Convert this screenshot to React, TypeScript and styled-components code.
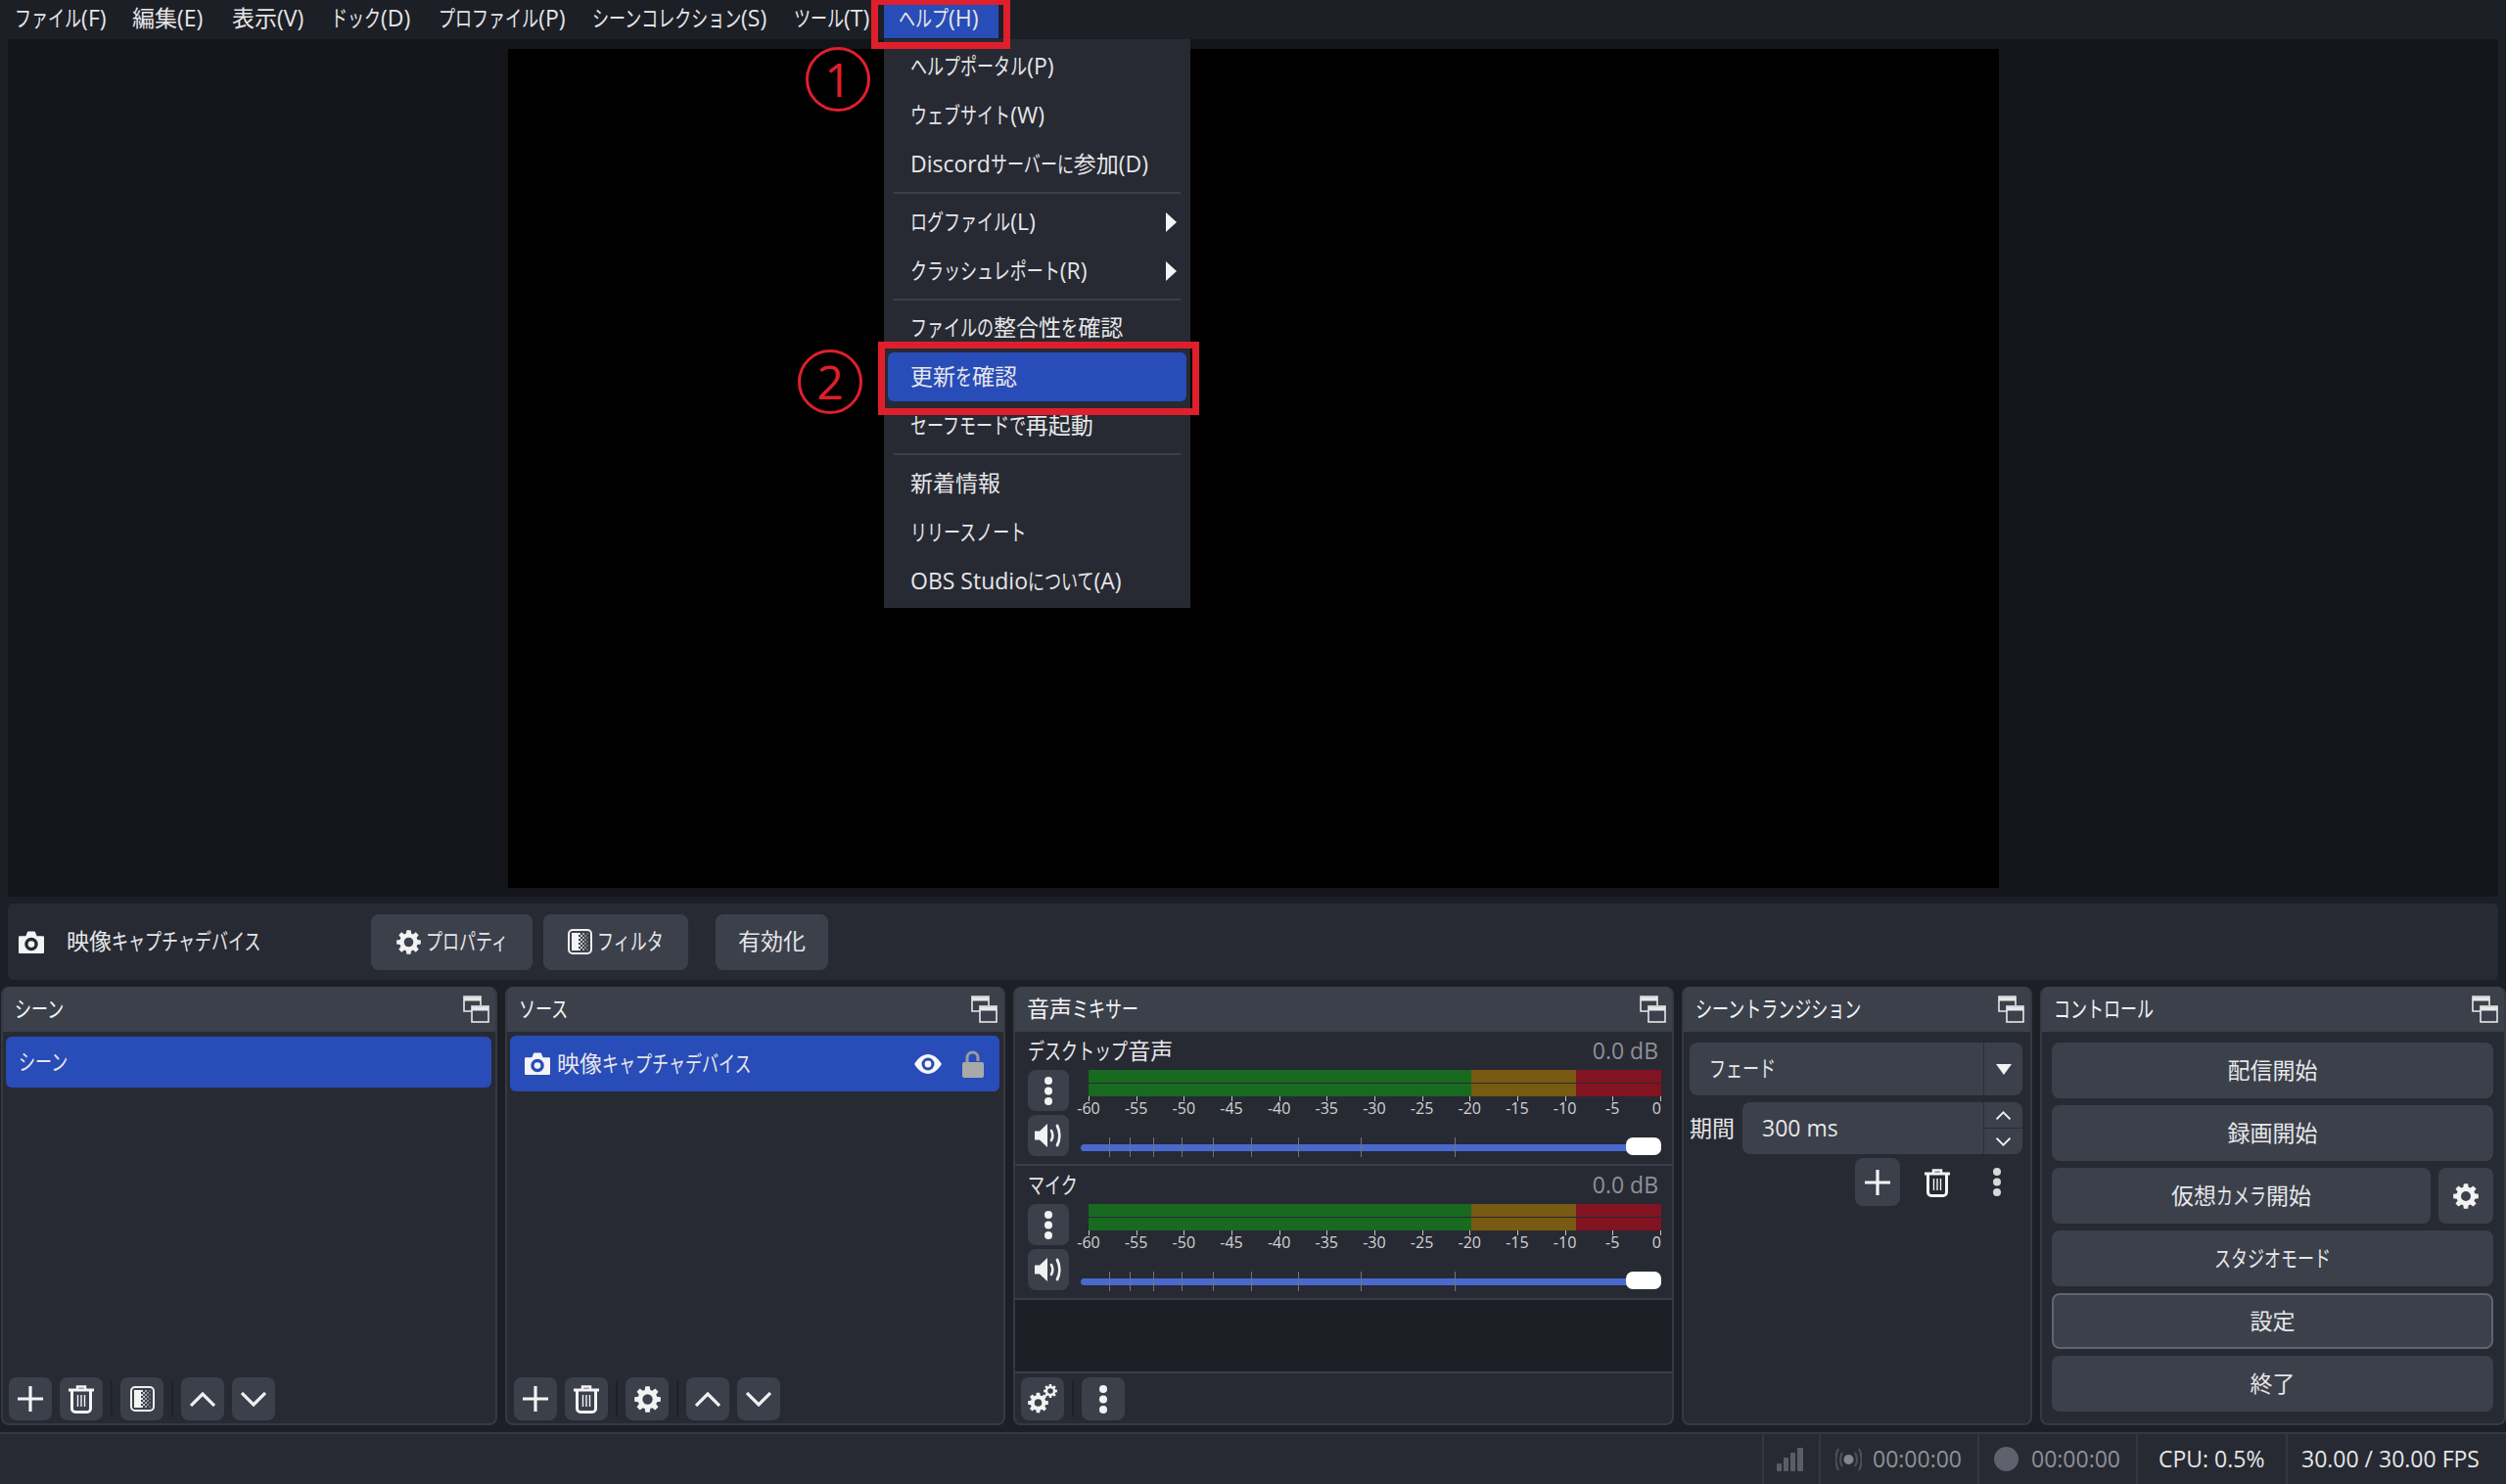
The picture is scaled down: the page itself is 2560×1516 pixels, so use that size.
import React from "react"
import styled, { createGlobalStyle } from "styled-components"

const BG = "#1d1f26"
const PANEL = "#272a33"
const RAISED = "#3c404b"
const BLUE = "#284cb8"
const RED = "#e01f2c"

const GlobalStyle = createGlobalStyle`
  html, body {
    margin: 0;
    padding: 0;
    background: ${BG};
  }
  * {
    box-sizing: border-box;
  }
`

const Page = styled.div`
  position: relative;
  width: 2560px;
  height: 1516px;
  overflow: hidden;
  display: flex;
  flex-direction: column;
  background: ${BG};
  color: #e6e6e8;
  font-family: "Open Sans", "Noto Sans CJK JP", sans-serif;
  font-size: 23px;
  line-height: 1.2;
  white-space: nowrap;
`

// kana in the reference comes from a narrow UI font, so squeeze the full-width glyphs
const KANA_SCALE = 0.74

const KanaRun = styled.span<{ $n: number }>`
  display: inline-block;
  transform: scaleX(${KANA_SCALE});
  transform-origin: left center;
  margin-right: ${p => (-p.$n * (1 - KANA_SCALE)).toFixed(3)}em;
`

const Jp = ({ t }: { t: string }) => (
  <span>
    {t.split(/([\u3040-\u30FF]+)/).map((part, i) =>
      i % 2 === 1 ? <KanaRun key={i} $n={part.length}>{part}</KanaRun> : part
    )}
  </span>
)

/* ---------- icons ---------- */

const gearPath = (cx: number, cy: number, r: number, hole: number) => {
  const teeth = 8
  const pts: string[] = []
  for (let i = 0; i < teeth; i++) {
    const a = (i / teeth) * Math.PI * 2
    const w = Math.PI / teeth
    const at = (rad: number, ang: number) =>
      `${(cx + Math.cos(ang) * rad).toFixed(2)} ${(cy + Math.sin(ang) * rad).toFixed(2)}`
    pts.push(at(r * 0.74, a - w * 0.72), at(r, a - w * 0.42), at(r, a + w * 0.42), at(r * 0.74, a + w * 0.72))
  }
  return `M${pts.join("L")}Z M${cx - hole} ${cy}a${hole} ${hole} 0 1 0 ${hole * 2} 0a${hole} ${hole} 0 1 0 ${-hole * 2} 0Z`
}

const Gear = ({ size = 26 }: { size?: number }) => (
  <svg width={size} height={size} viewBox="0 0 24 24" fill="#f2f2f2">
    <path fillRule="evenodd" d={gearPath(12, 12, 12, 4.6)} />
  </svg>
)

const GearPair = () => (
  <svg width="30" height="30" viewBox="0 0 30 30" fill="#f2f2f2">
    <path fillRule="evenodd" d={gearPath(10.5, 19, 10.5, 3.8)} />
    <path fillRule="evenodd" d={gearPath(23, 7, 7, 2.8)} />
  </svg>
)

const Camera = () => (
  <svg width="26" height="23" viewBox="0 0 25 22" fill="#f4f4f4">
    <path
      fillRule="evenodd"
      d="M1 5h6l2-4.500h7L18 5h6a1 1 0 0 1 1 1v15a1 1 0 0 1-1 1H1a1 1 0 0 1-1-1V6a1 1 0 0 1 1-1zM12.500 6.500a6.500 6.500 0 1 0 0 13 6.500 6.500 0 0 0 0-13z"
    />
    <circle cx="12.5" cy="13" r="3.2" />
  </svg>
)

const FloatIcon = () => (
  <svg width="27" height="28" viewBox="0 0 27 28" fill="none" stroke="#e8e8e8" strokeWidth="1.6">
    <path d="M9 16H1V1h17v9" />
    <path d="M1 3.5h17" strokeWidth="4" />
    <rect x="9" y="11" width="17" height="16" />
    <path d="M9 13.5h17" strokeWidth="4" />
  </svg>
)

const Plus = () => (
  <svg width="28" height="28" viewBox="0 0 28 28" stroke="#f4f4f4" strokeWidth="3.2">
    <path d="M14 1v26M1 14h26" />
  </svg>
)

const Trash = () => (
  <svg width="28" height="30" viewBox="0 0 28 30" fill="none" stroke="#f4f4f4">
    <path d="M1 6h26" strokeWidth="3" />
    <path d="M10 5V2.5h8V5" strokeWidth="2.5" />
    <path d="M4.5 7v18a3.5 3.5 0 0 0 3.5 3.5h12a3.5 3.5 0 0 0 3.5-3.5V7" strokeWidth="3" />
    <path d="M10.5 11v12M14 11v12M17.5 11v12" strokeWidth="1.4" />
  </svg>
)

const Chevron = ({ up, w = 26, h = 15 }: { up?: boolean; w?: number; h?: number }) => (
  <svg width={w} height={h} viewBox="0 0 26 15" fill="none" stroke="#f0f0f0" strokeWidth="3.2">
    <path d={up ? "M1 14L13 2l12 12" : "M1 1l12 12L25 1"} />
  </svg>
)

// solid on the left, dissolving to nothing through a dither on the right
const DITHER = Array.from({ length: 5 }, (_, col) =>
  Array.from({ length: 9 }, (_, row) => ({ col, row }))
)
  .flat()
  .filter(({ col, row }) => (col + row) % 2 === 0)

const FilterIcon = ({ size = 25 }: { size?: number }) => (
  <svg width={size} height={size + 1} viewBox="0 0 25 26">
    <rect x="4" y="4" width="7" height="18" fill="#f4f4f4" />
    {DITHER.map(({ col, row }) => (
      <rect
        key={`${col}-${row}`}
        x={11 + col * 2}
        y={4 + row * 2}
        width="2"
        height="2"
        fill="#f4f4f4"
        opacity={0.9 - col * 0.17}
      />
    ))}
    <rect x="1" y="1" width="23" height="24" rx="4" fill="none" stroke="#f0f0f0" strokeWidth="2" />
  </svg>
)

const Kebab = ({ color = "#f2f2f2" }: { color?: string }) => (
  <svg width="10" height="31" viewBox="0 0 10 31" fill={color}>
    <circle cx="5" cy="5" r="4" />
    <circle cx="5" cy="15.5" r="4" />
    <circle cx="5" cy="26" r="4" />
  </svg>
)

const Speaker = () => (
  <svg width="29" height="26" viewBox="0 0 29 26" fill="none" stroke="#f2f2f2">
    <path d="M0 8.5h5L13 1v24l-8-7.5H0z" fill="#f2f2f2" stroke="none" />
    <path d="M17 8c1.6 3 1.6 7 0 10" strokeWidth="2.6" strokeLinecap="round" />
    <path d="M23 3c3 6 3 14 0 20" strokeWidth="2.8" strokeLinecap="round" />
  </svg>
)

const Eye = () => (
  <svg width="28" height="20" viewBox="0 0 28 20" fill="#f6f6f6">
    <path
      fillRule="evenodd"
      d="M0 10C4 3.5 9 0 14 0s10 3.500 14 10c-4 6.500-9 10-14 10S4 16.500 0 10zM14 3.500a6.500 6.500 0 1 0 0 13 6.500 6.500 0 0 0 0-13z"
    />
    <circle cx="14" cy="10" r="3.4" />
  </svg>
)

const OpenLock = () => (
  <svg width="22" height="28" viewBox="0 0 22 28" fill="none">
    <path d="M5 12V7.500a5.500 5.500 0 0 1 11 0V11" stroke="#9b9ba0" strokeWidth="3" />
    <rect y="12" width="22" height="16" rx="2" fill="#a9a9a9" />
  </svg>
)

const SignalBars = () => (
  <svg width="27" height="24" viewBox="0 0 27 24" fill="#5a5d66">
    <rect y="16" width="5" height="8" rx="1" />
    <rect x="7" y="10" width="5" height="14" rx="1" />
    <rect x="14" y="5" width="5" height="19" rx="1" />
    <rect x="21" y="0" width="6" height="24" rx="1" />
  </svg>
)

const Broadcast = () => (
  <svg width="27" height="24" viewBox="0 0 27 24" fill="none" stroke="#4f525a" strokeWidth="2">
    <path d="M7 5c-2.600 4-2.600 10 0 14M20 5c2.600 4 2.600 10 0 14" />
    <path d="M3 1C-.5 7-.5 17 3 23M24 1c3.500 6 3.500 16 0 22" />
    <circle cx="13.500" cy="12" r="5" fill="#83858c" stroke="none" />
  </svg>
)

/* ---------- menu ---------- */

const MenuBar = styled.div`
  height: 40px;
  flex: none;
  display: flex;
  align-items: flex-start;
  font-size: 23px;
`

const MenuEntry = styled.div<{ $w: number; $active?: boolean }>`
  width: ${p => p.$w}px;
  height: ${p => (p.$active ? "34px" : "38px")};
  margin-top: ${p => (p.$active ? "5px" : "0")};
  padding: 0 0 ${p => (p.$active ? "6px" : "0")} 15px;
  display: flex;
  align-items: center;
  background: ${p => (p.$active ? BLUE : "transparent")};
`

const Dropdown = styled.div`
  position: absolute;
  left: 903px;
  top: 40px;
  width: 313px;
  height: 581px;
  padding-top: 3px;
  background: ${PANEL};
`

const DropItem = styled.div<{ $active?: boolean }>`
  height: 50px;
  margin: 0 4px;
  padding: 0 10px 0 23px;
  display: flex;
  align-items: center;
  justify-content: space-between;
  border-radius: 6px;
  background: ${p => (p.$active ? BLUE : "transparent")};
`

const DropSeparator = styled.div`
  height: 2px;
  margin: 3px 10px 3.5px;
  background: #3c404b;
`

const SubArrow = styled.div`
  width: 0;
  height: 0;
  border-left: 11px solid #f4f4f4;
  border-top: 10px solid transparent;
  border-bottom: 10px solid transparent;
`

const RedBox = styled.div<{ $x: number; $y: number; $w: number; $h: number }>`
  position: absolute;
  left: ${p => p.$x}px;
  top: ${p => p.$y}px;
  width: ${p => p.$w}px;
  height: ${p => p.$h}px;
  border: 7px solid ${RED};
`

const Marker = styled.div<{ $x: number; $y: number }>`
  position: absolute;
  left: ${p => p.$x}px;
  top: ${p => p.$y}px;
  width: 66px;
  height: 66px;
  border: 3px solid ${RED};
  border-radius: 50%;
  display: flex;
  align-items: center;
  justify-content: center;
  color: ${RED};
  font-size: 48px;
  line-height: 1;
`

/* ---------- preview and context bar ---------- */

const Preview = styled.div`
  flex: none;
  height: 876px;
  margin: 0 8px;
  padding: 10px 0 9px;
  display: flex;
  justify-content: center;
  background: #13151a;
`

const PreviewCanvas = styled.div`
  width: 1523px;
  background: #000;
`

const ContextBar = styled.div`
  flex: none;
  height: 78px;
  margin: 7px 8px 0;
  padding-left: 11px;
  display: flex;
  align-items: center;
  border-radius: 6px;
  background: ${PANEL};
`

const ContextName = styled.div`
  width: 334px;
  padding-left: 23px;
`

const ContextButton = styled.div<{ $w: number; $gap?: number }>`
  width: ${p => p.$w}px;
  height: 57px;
  margin-right: ${p => p.$gap ?? 11}px;
  display: flex;
  align-items: center;
  justify-content: center;
  gap: 5px;
  border-radius: 8px;
  background: ${RAISED};
`

/* ---------- docks ---------- */

const DockRow = styled.div`
  flex: none;
  height: 448px;
  margin-top: 7px;
  padding-left: 1px;
  display: flex;
  gap: 8px;
`

const Dock = styled.section<{ $w: number }>`
  width: ${p => p.$w}px;
  display: flex;
  flex-direction: column;
  overflow: hidden;
  border: 2px solid #363942;
  border-top: 0;
  border-radius: 8px;
  background: ${PANEL};
`

const DockHeader = styled.header`
  flex: none;
  height: 46px;
  padding: 0 6px 0 12px;
  display: flex;
  align-items: center;
  justify-content: space-between;
  background: ${RAISED};
  color: #f4f4f4;
`

const DockBody = styled.div`
  flex: 1;
  display: flex;
  flex-direction: column;
  min-height: 0;
`

const Toolbar = styled.div<{ $pad: number }>`
  flex: none;
  margin-top: auto;
  padding: 0 0 3px ${p => p.$pad}px;
  display: flex;
  align-items: center;
  gap: 8px;
`

const ToolButton = styled.div`
  width: 44px;
  height: 44px;
  display: flex;
  align-items: center;
  justify-content: center;
  border-radius: 8px;
  background: ${RAISED};
`

const ToolDivider = styled.div`
  width: 2px;
  height: 36px;
  background: #1f2128;
`

const SceneRow = styled.div`
  height: 52px;
  margin: 5px 4px 0 3px;
  padding-left: 13px;
  display: flex;
  align-items: center;
  border-radius: 6px;
  background: ${BLUE};
`

const SourceRow = styled.div`
  height: 57px;
  margin: 4px 4px 0 3px;
  padding: 0 16px 0 15px;
  display: flex;
  align-items: center;
  border-radius: 6px;
  background: ${BLUE};
`

const SourceName = styled.div`
  flex: 1;
  padding-left: 7px;
`

const SourceIcons = styled.div`
  display: flex;
  align-items: center;
  gap: 21px;
`

/* ---------- mixer ---------- */

const Channel = styled.div`
  flex: none;
  height: 137px;
  padding: 8px 14px 0 13px;
  border-bottom: 2px solid #3a3d47;
`

const ChannelTitle = styled.div`
  height: 24px;
  display: flex;
  align-items: center;
  justify-content: space-between;
`

const Db = styled.span`
  color: #8f9197;
`

const ChannelBody = styled.div`
  margin-top: 7px;
  display: grid;
  grid-template-columns: 42px 1fr;
  column-gap: 12px;
`

const ChannelButtons = styled.div`
  display: flex;
  flex-direction: column;
  gap: 4px;
`

const ChannelButton = styled.div`
  height: 42px;
  display: flex;
  align-items: center;
  justify-content: center;
  border-radius: 8px;
  background: ${RAISED};
`

const MeterColumn = styled.div`
  display: flex;
  flex-direction: column;
`

const Meter = styled.div`
  height: 27px;
  margin-left: 8px;
  display: flex;
  flex-direction: column;
  gap: 1px;
`

const MeterLine = styled.div`
  flex: 1;
  display: flex;
`

const MeterSegment = styled.div<{ $w: number; $c: string }>`
  width: ${p => p.$w}px;
  background: ${p => p.$c};
`

const Scale = styled.div`
  height: 25px;
  margin-left: 8px;
  display: flex;
  justify-content: space-between;
`

const ScaleMark = styled.div`
  position: relative;
  width: 1px;
  height: 5px;
  background: #c6c6c8;
`

const ScaleLabel = styled.span<{ $end?: boolean }>`
  position: absolute;
  top: 1px;
  left: 0;
  transform: translateX(${p => (p.$end ? "-90%" : "-50%")});
  font-size: 16px;
  line-height: 22px;
  color: #d2d2d4;
`

const Fader = styled.div`
  position: relative;
  height: 20px;
  margin-top: 17px;
  display: flex;
  align-items: center;
`

const FaderTrack = styled.div`
  width: 100%;
  height: 7px;
  border-radius: 4px;
  background: #4a69cf;
`

const FaderTick = styled.div`
  position: absolute;
  top: 0;
  width: 1px;
  height: 20px;
  background: #70737c;
`

const FaderHandle = styled.div`
  position: absolute;
  right: 0;
  top: 0;
  width: 36px;
  height: 18px;
  border-radius: 7px;
  background: #fff;
`

const MixerFill = styled.div`
  flex: 1;
  border-bottom: 2px solid #3a3d47;
  background: ${BG};
`

const MixerToolbar = styled(Toolbar)`
  margin-top: 4px;
`

/* ---------- transitions ---------- */

const TransitionBody = styled(DockBody)`
  padding: 11px 8px 0 6px;
  gap: 7px;
`

const Combo = styled.div`
  height: 54px;
  display: flex;
  border-radius: 8px;
  background: ${RAISED};
`

const ComboText = styled.div<{ $pad: number }>`
  flex: 1;
  padding-left: ${p => p.$pad}px;
  display: flex;
  align-items: center;
`

const ComboSide = styled.div`
  width: 40px;
  display: flex;
  align-items: center;
  justify-content: center;
  border-left: 1px solid #2b2e37;
`

const ComboArrow = styled.div`
  width: 0;
  height: 0;
  border-top: 11px solid #f2f2f2;
  border-left: 8px solid transparent;
  border-right: 8px solid transparent;
`

const DurationRow = styled.div`
  display: flex;
  align-items: center;
  gap: 8px;
`

const SpinBox = styled(Combo)`
  flex: 1;
  height: 53px;
`

const SpinSide = styled.div`
  width: 40px;
  display: flex;
  flex-direction: column;
  border-left: 1px solid #2b2e37;
`

const SpinStep = styled.div`
  flex: 1;
  display: flex;
  align-items: center;
  justify-content: center;
  & + & {
    border-top: 1px solid #2b2e37;
  }
`

const TransitionTools = styled.div`
  margin-top: -3px;
  padding-right: 3px;
  display: flex;
  justify-content: flex-end;
  gap: 15px;
`

const TransitionTool = styled.div<{ $raised?: boolean }>`
  width: 46px;
  height: 49px;
  display: flex;
  align-items: center;
  justify-content: center;
  border-radius: 8px;
  background: ${p => (p.$raised ? RAISED : "transparent")};
`

/* ---------- controls ---------- */

const ControlBody = styled(DockBody)`
  padding: 11px 11px 0 10px;
  gap: 7px;
`

const ControlLine = styled.div`
  display: flex;
  gap: 8px;
`

const ControlButton = styled.div<{ $focus?: boolean; $w?: number }>`
  flex: ${p => (p.$w ? "none" : "1")};
  width: ${p => (p.$w ? `${p.$w}px` : "auto")};
  height: 57px;
  display: flex;
  align-items: center;
  justify-content: center;
  border: ${p => (p.$focus ? "2px solid #61646e" : "0")};
  border-radius: 8px;
  background: ${RAISED};
`

/* ---------- status bar ---------- */

const StatusBar = styled.footer`
  flex: 1;
  margin-top: 7px;
  display: flex;
  justify-content: flex-end;
  border-top: 2px solid #34373f;
  background: ${PANEL};
`

const StatusCell = styled.div<{ $w: number; $pad: number; $gap?: number }>`
  width: ${p => p.$w}px;
  padding-left: ${p => p.$pad}px;
  display: flex;
  align-items: center;
  gap: ${p => p.$gap ?? 0}px;
  border-left: 2px solid #34373f;
`

const StatusTime = styled.span`
  color: #8f9197;
`

const RecordDot = styled.div`
  width: 25px;
  height: 25px;
  border-radius: 50%;
  background: #5f626c;
`

/* ---------- data ---------- */

const MENU: [string, number][] = [
  ["ファイル(F)", 120],
  ["編集(E)", 102],
  ["表示(V)", 101],
  ["ドック(D)", 110],
  ["プロファイル(P)", 157],
  ["シーンコレクション(S)", 206],
  ["ツール(T)", 107],
]

const DB_MARKS = ["-60", "-55", "-50", "-45", "-40", "-35", "-30", "-25", "-20", "-15", "-10", "-5", "0"]
const FADER_TICKS = [29, 50, 74, 103, 135, 174, 222, 286, 382]

const MeterBar = () => (
  <MeterLine>
    <MeterSegment $w={391} $c="#186a20" />
    <MeterSegment $w={107} $c="#795a12" />
    <MeterSegment $w={87} $c="#821321" />
  </MeterLine>
)

const MixerChannel = ({ name }: { name: string }) => (
  <Channel>
    <ChannelTitle>
      <Jp t={name} />
      <Db>0.0 dB</Db>
    </ChannelTitle>
    <ChannelBody>
      <ChannelButtons>
        <ChannelButton><Kebab /></ChannelButton>
        <ChannelButton><Speaker /></ChannelButton>
      </ChannelButtons>
      <MeterColumn>
        <Meter>
          <MeterBar />
          <MeterBar />
        </Meter>
        <Scale>
          {DB_MARKS.map((m, i) => (
            <ScaleMark key={m}>
              <ScaleLabel $end={i === DB_MARKS.length - 1}>{m}</ScaleLabel>
            </ScaleMark>
          ))}
        </Scale>
        <Fader>
          <FaderTrack />
          {FADER_TICKS.map(x => (
            <FaderTick key={x} style={{ left: x }} />
          ))}
          <FaderHandle />
        </Fader>
      </MeterColumn>
    </ChannelBody>
  </Channel>
)

const Header = ({ title }: { title: string }) => (
  <DockHeader>
    <Jp t={title} />
    <FloatIcon />
  </DockHeader>
)

const App = () => {
  return (
    <Page>
      <GlobalStyle />

      <MenuBar>
        {MENU.map(([label, w]) => (
          <MenuEntry key={label} $w={w}><Jp t={label} /></MenuEntry>
        ))}
        <MenuEntry $w={117} $active><Jp t="ヘルプ(H)" /></MenuEntry>
      </MenuBar>

      <Preview>
        <PreviewCanvas />
      </Preview>

      <ContextBar>
        <Camera />
        <ContextName><Jp t="映像キャプチャデバイス" /></ContextName>
        <ContextButton $w={165}><Gear size={25} /><Jp t="プロパティ" /></ContextButton>
        <ContextButton $w={148} $gap={28}><FilterIcon /><Jp t="フィルタ" /></ContextButton>
        <ContextButton $w={115}>有効化</ContextButton>
      </ContextBar>

      <DockRow>
        <Dock $w={507}>
          <Header title="シーン" />
          <DockBody>
            <SceneRow><Jp t="シーン" /></SceneRow>
            <Toolbar $pad={6}>
              <ToolButton><Plus /></ToolButton>
              <ToolButton><Trash /></ToolButton>
              <ToolDivider />
              <ToolButton><FilterIcon /></ToolButton>
              <ToolDivider />
              <ToolButton><Chevron up /></ToolButton>
              <ToolButton><Chevron /></ToolButton>
            </Toolbar>
          </DockBody>
        </Dock>

        <Dock $w={511}>
          <Header title="ソース" />
          <DockBody>
            <SourceRow>
              <Camera />
              <SourceName><Jp t="映像キャプチャデバイス" /></SourceName>
              <SourceIcons>
                <Eye />
                <OpenLock />
              </SourceIcons>
            </SourceRow>
            <Toolbar $pad={7}>
              <ToolButton><Plus /></ToolButton>
              <ToolButton><Trash /></ToolButton>
              <ToolDivider />
              <ToolButton><Gear size={27} /></ToolButton>
              <ToolDivider />
              <ToolButton><Chevron up /></ToolButton>
              <ToolButton><Chevron /></ToolButton>
            </Toolbar>
          </DockBody>
        </Dock>

        <Dock $w={675}>
          <Header title="音声ミキサー" />
          <DockBody>
            <MixerChannel name="デスクトップ音声" />
            <MixerChannel name="マイク" />
            <MixerFill />
            <MixerToolbar $pad={6}>
              <ToolButton><GearPair /></ToolButton>
              <ToolDivider />
              <ToolButton><Kebab /></ToolButton>
            </MixerToolbar>
          </DockBody>
        </Dock>

        <Dock $w={358}>
          <Header title="シーントランジション" />
          <TransitionBody>
            <Combo>
              <ComboText $pad={20}><Jp t="フェード" /></ComboText>
              <ComboSide><ComboArrow /></ComboSide>
            </Combo>
            <DurationRow>
              期間
              <SpinBox>
                <ComboText $pad={20}>300 ms</ComboText>
                <SpinSide>
                  <SpinStep><Chevron up w={15} h={9} /></SpinStep>
                  <SpinStep><Chevron w={15} h={9} /></SpinStep>
                </SpinSide>
              </SpinBox>
            </DurationRow>
            <TransitionTools>
              <TransitionTool $raised><Plus /></TransitionTool>
              <TransitionTool><Trash /></TransitionTool>
              <TransitionTool><Kebab color="#d8d8da" /></TransitionTool>
            </TransitionTools>
          </TransitionBody>
        </Dock>

        <Dock $w={476}>
          <Header title="コントロール" />
          <ControlBody>
            <ControlLine><ControlButton>配信開始</ControlButton></ControlLine>
            <ControlLine><ControlButton>録画開始</ControlButton></ControlLine>
            <ControlLine>
              <ControlButton><Jp t="仮想カメラ開始" /></ControlButton>
              <ControlButton $w={56}><Gear /></ControlButton>
            </ControlLine>
            <ControlLine><ControlButton><Jp t="スタジオモード" /></ControlButton></ControlLine>
            <ControlLine><ControlButton $focus>設定</ControlButton></ControlLine>
            <ControlLine><ControlButton>終了</ControlButton></ControlLine>
          </ControlBody>
        </Dock>
      </DockRow>

      <StatusBar>
        <StatusCell $w={58} $pad={13}><SignalBars /></StatusCell>
        <StatusCell $w={162} $pad={15} $gap={11}><Broadcast /><StatusTime>00:00:00</StatusTime></StatusCell>
        <StatusCell $w={162} $pad={15} $gap={13}><RecordDot /><StatusTime>00:00:00</StatusTime></StatusCell>
        <StatusCell $w={153} $pad={21}>CPU: 0.5%</StatusCell>
        <StatusCell $w={225} $pad={14}>30.00 / 30.00 FPS</StatusCell>
      </StatusBar>

      <Dropdown>
        <DropItem><Jp t="ヘルプポータル(P)" /></DropItem>
        <DropItem><Jp t="ウェブサイト(W)" /></DropItem>
        <DropItem><Jp t="Discordサーバーに参加(D)" /></DropItem>
        <DropSeparator />
        <DropItem><Jp t="ログファイル(L)" /><SubArrow /></DropItem>
        <DropItem><Jp t="クラッシュレポート(R)" /><SubArrow /></DropItem>
        <DropSeparator />
        <DropItem><Jp t="ファイルの整合性を確認" /></DropItem>
        <DropItem $active><Jp t="更新を確認" /></DropItem>
        <DropItem><Jp t="セーフモードで再起動" /></DropItem>
        <DropSeparator />
        <DropItem>新着情報</DropItem>
        <DropItem><Jp t="リリースノート" /></DropItem>
        <DropItem><Jp t="OBS Studioについて(A)" /></DropItem>
      </Dropdown>

      <RedBox $x={890} $y={-2} $w={142} $h={52} />
      <RedBox $x={897} $y={349} $w={328} $h={75} />
      <Marker $x={823} $y={48}>1</Marker>
      <Marker $x={815} $y={357}>2</Marker>
    </Page>
  )
}

export default App
